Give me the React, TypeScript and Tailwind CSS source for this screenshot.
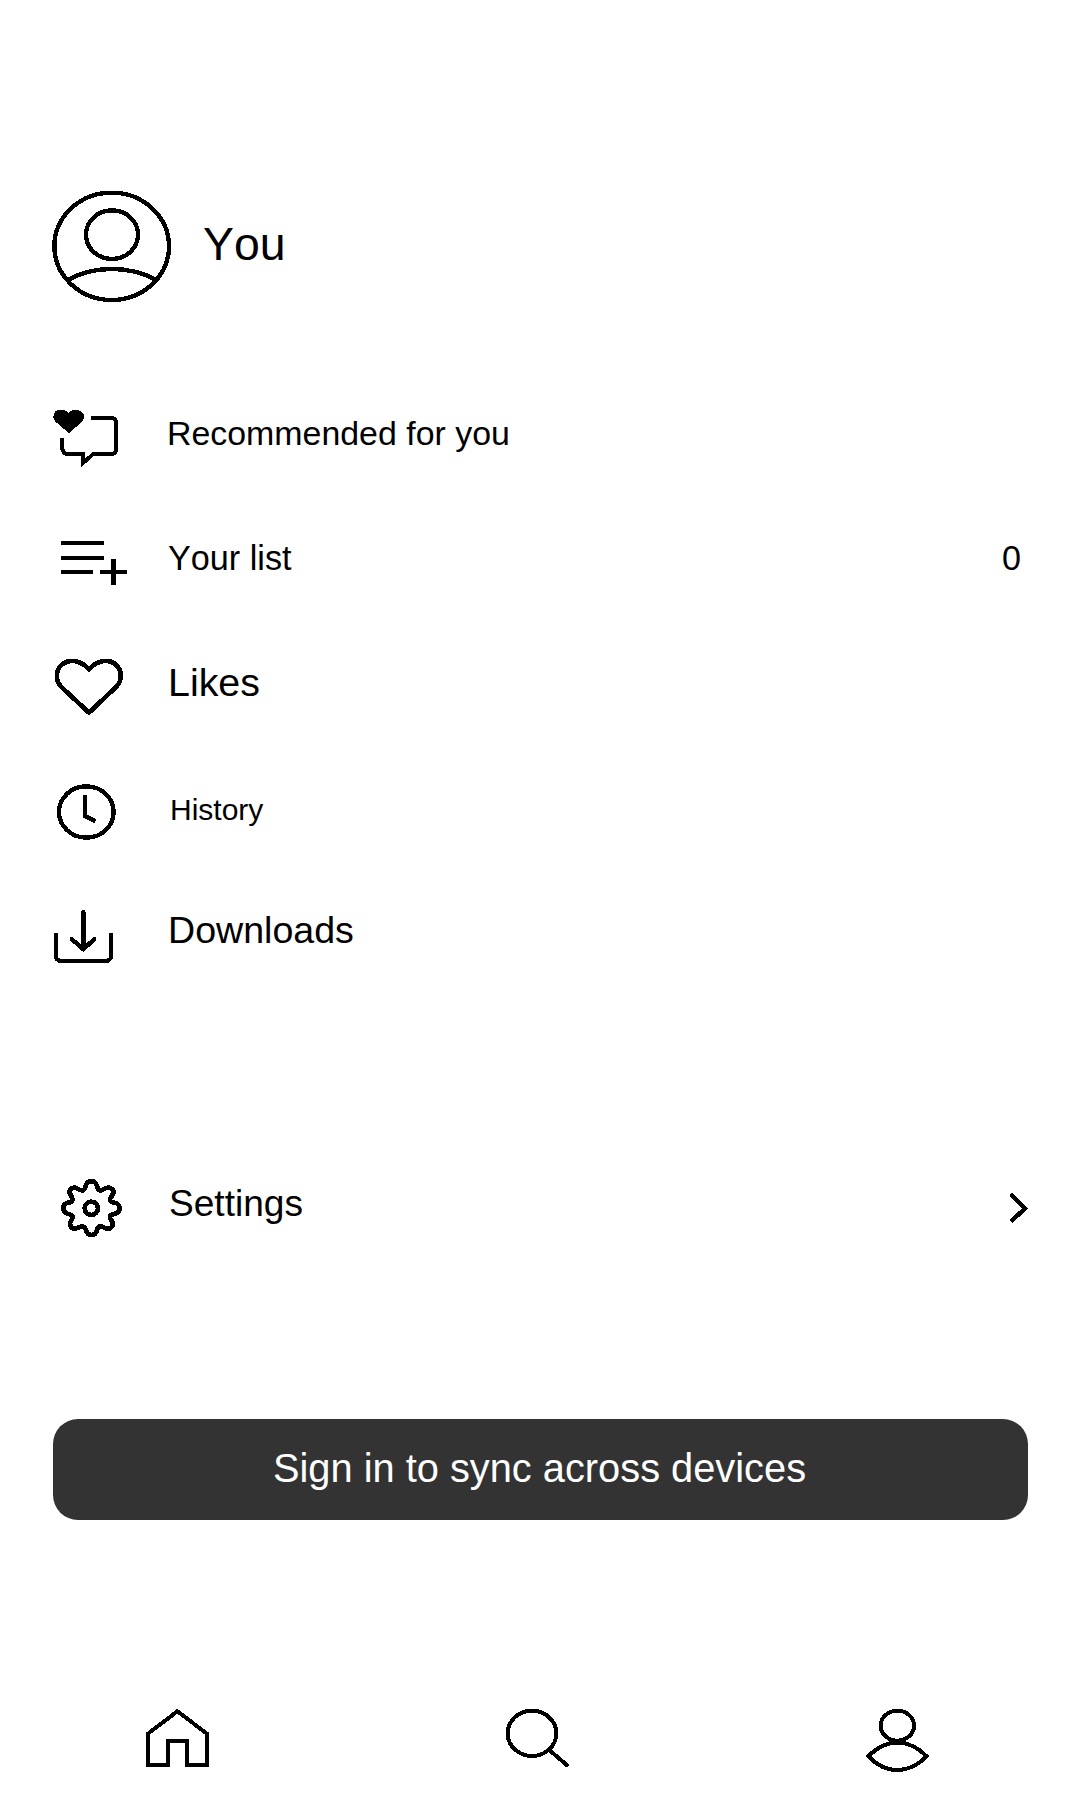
import type { ReactNode } from "react";

type IconProps = { w: number; h: number; sw: number; children: ReactNode };

// Icons are drawn on a grid three times finer than their rendered size.
function Icon({ w, h, sw, children }: IconProps) {
  return (
    <svg
      width={w}
      height={h}
      viewBox={`0 0 ${w * 3} ${h * 3}`}
      fill="none"
      stroke="#000"
      strokeWidth={sw}
      shapeRendering="crispEdges"
      className="shrink-0"
      aria-hidden="true"
    >
      {children}
    </svg>
  );
}

type RowProps = { icon: ReactNode; label: string; row: string; text: string; trailing?: ReactNode };

function Row({ icon, label, row, text, trailing }: RowProps) {
  return (
    <li className={`flex items-start ${row}`}>
      {icon}
      <span className={`whitespace-nowrap leading-[40px] ${text}`}>{label}</span>
      {trailing}
    </li>
  );
}

export default function App() {
  return (
    <main className="flex h-[1800px] w-[1080px] flex-col overflow-hidden bg-white pt-[180px] font-['Liberation_Sans',Arial,sans-serif] text-black [font-kerning:none]">
      <header className="flex h-[215px] items-start pl-[40px]">
        <Icon w={140} h={130} sw={13}>
          <ellipse cx="215" cy="199" rx="172" ry="161" />
          <ellipse cx="216" cy="164" rx="78" ry="73" />
          <path d="M83 300C160 256 270 256 349 300" />
        </Icon>
        <h1 className="ml-[23px] mt-[34px] text-[46.4px] leading-[60px]">You</h1>
      </header>

      <ul className="flex flex-col pl-[40px]">
        <Row
          label="Recommended for you"
          row="h-[130px]"
          text="ml-[27px] mt-[18px] text-[33.9px]"
          icon={
            <Icon w={100} h={80} sw={12}>
              <path d="M87 115L45 79C35 67 40 47 56 44C69 42 81 47 86 54C92 46 102 42 115 45C132 49 137 65 127 79Z" fill="#000" stroke="none" />
              <path d="M154 69H213Q229 69 229 86V160Q229 177 213 177H160L129 204V177H84Q66 177 66 153V130" />
            </Icon>
          }
        />
        <Row
          label="Your list"
          row="h-[120px]"
          text="ml-[28px] mt-[13px] text-[34.2px]"
          icon={
            <Icon w={100} h={70} sw={13}>
              <path d="M63 54H191M63 98H191M63 141H158M180 141H261" />
              <path d="M220 102V180" strokeWidth="14" />
            </Icon>
          }
          trailing={<span className="ml-auto mr-[59px] mt-[13px] text-[34.2px] leading-[40px]">0</span>}
        />
        <Row
          label="Likes"
          row="h-[125px]"
          text="ml-[28px] mt-[17px] text-[39.4px]"
          icon={
            <Icon w={100} h={80} sw={14}>
              <path d="M147 203L65 127C45 107 46 75 66 58C91 39 125 48 147 73C169 48 203 39 227 58C247 77 248 107 227 127Z" />
            </Icon>
          }
        />
        <Row
          label="History"
          row="h-[130px]"
          text="ml-[30px] mt-[20px] text-[30px]"
          icon={
            <Icon w={100} h={80} sw={13}>
              <ellipse cx="139" cy="126" rx="82" ry="77" />
              <path d="M135 75V138L166 153" />
            </Icon>
          }
        />
        <Row
          label="Downloads"
          row="h-[270px]"
          text="ml-[28px] mt-[10px] text-[37.6px]"
          icon={
            <Icon w={100} h={70} sw={12}>
              <path d="M48 104V167Q48 183 65 183H196Q213 183 213 167V104" strokeLinecap="round" />
              <path d="M130 36V148M95 117L130 148L163 117" strokeLinecap="round" strokeWidth="13" />
            </Icon>
          }
        />
        <Row
          label="Settings"
          row="h-[249px]"
          text="ml-[29px] mt-[13px] text-[37.1px]"
          icon={
            <Icon w={100} h={80} sw={14}>
              <circle cx="154" cy="115" r="20" />
              <path
                strokeLinejoin="round"
                d="M137 48C142 29 166 29 171 48C174 62 180 65 192 57C212 46 228 61 216 77C206 91 209 96 223 98C244 102 244 127 223 132C209 135 206 140 214 151C226 168 210 182 194 173C180 166 174 168 171 181C166 199 143 199 138 181C134 168 128 166 115 173C97 182 83 168 94 151C101 140 98 135 85 132C65 127 65 102 85 98C98 96 101 91 93 77C82 61 97 46 114 57C128 65 134 62 137 48Z"
              />
            </Icon>
          }
          trailing={
            <span className="ml-auto">
              <Icon w={100} h={80} sw={13}>
                <path d="M96 76L135 115L97 151" strokeLinecap="round" />
              </Icon>
            </span>
          }
        />
      </ul>

      <button className="mx-[53px] flex h-[101px] w-[975px] shrink-0 justify-center rounded-[25px] bg-[#333333] pr-[2px] text-[39.8px] leading-[98px] text-white">
        Sign in to sync across devices
      </button>

      <nav className="mt-[170px] flex h-[90px] items-start justify-between pl-[130px] pr-[130px]">
        <Icon w={100} h={90} sw={12}>
          <path d="M54 131L142 64L231 131V226H171V153H113V226H54Z" />
        </Icon>
        <Icon w={100} h={90} sw={12}>
          <ellipse cx="126" cy="130" rx="73" ry="68" />
          <path d="M179 181L235 229" />
        </Icon>
        <Icon w={100} h={90} sw={12}>
          <ellipse cx="142" cy="107" rx="50" ry="45" />
          <path d="M55 199C108 144 176 144 230 199C176 254 108 254 55 199Z" />
        </Icon>
      </nav>
    </main>
  );
}
